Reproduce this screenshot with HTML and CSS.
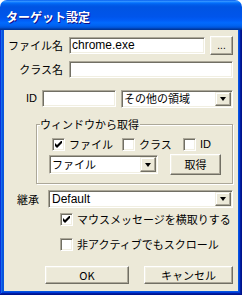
FILE: index.html
```html
<!DOCTYPE html>
<html lang="ja">
<head>
<meta charset="utf-8">
<title>ターゲット設定</title>
<link rel="stylesheet" href="styles.css">
</head>
<body>
<div class="win">
  <div class="title"><span>ターゲット設定</span></div>
  <div class="frame">
    <div class="client">
      <div class="row r1">
        <span class="lbl">ファイル名</span>
        <div class="field latin f-file">chrome.exe</div>
        <div class="btn btn-dots">...</div>
      </div>
      <div class="row r2">
        <span class="lbl">クラス名</span>
        <div class="field f-class"></div>
      </div>
      <div class="row r3">
        <span class="lbl-id">ID</span>
        <div class="field f-id"></div>
        <div class="combo c-area"><span class="ctext">その他の領域</span><span class="drop"><i class="tri"></i></span></div>
      </div>
      <div class="group">
        <span class="legend">ウィンドウから取得</span>
        <div class="checks">
          <div class="ck ck1"><span class="cb"><svg width="7" height="7" viewBox="0 0 7 7"><polygon points="0,2 2,4 7,-1 7,2 2,7 0,5" fill="#000"/></svg></span><span>ファイル</span></div>
          <div class="ck ck2"><span class="cb"></span><span>クラス</span></div>
          <div class="ck ck3"><span class="cb"></span><span class="latin-s">ID</span></div>
        </div>
        <div class="grow">
          <div class="combo c-src"><span class="ctext">ファイル</span><span class="drop"><i class="tri"></i></span></div>
          <div class="btn btn-get">取得</div>
        </div>
      </div>
      <div class="row r4">
        <span class="lbl-inh">継承</span>
        <div class="combo c-inh"><span class="ctext latin">Default</span><span class="drop"><i class="tri"></i></span></div>
      </div>
      <div class="chk chk1"><span class="cb"><svg width="7" height="7" viewBox="0 0 7 7"><polygon points="0,2 2,4 7,-1 7,2 2,7 0,5" fill="#000"/></svg></span><span>マウスメッセージを横取りする</span></div>
      <div class="chk chk2"><span class="cb"></span><span>非アクティブでもスクロール</span></div>
      <div class="btns">
        <div class="btn btn-ok">OK</div>
        <div class="btn btn-cancel">キャンセル</div>
      </div>
    </div>
  </div>
</div>
</body>
</html>
```
FILE: styles.css
```css
* { box-sizing: border-box; }
html, body { margin: 0; padding: 0; background: #ffffff; }
body {
  width: 242px; height: 295px; overflow: hidden;
  font-family: "Noto Sans CJK JP", "Liberation Sans", sans-serif;
  font-size: 11px; line-height: 13px; color: #000;
}
.win {
  width: 242px; height: 295px;
  display: flex; flex-direction: column;
  border-radius: 7px 7px 0 0; overflow: hidden;
}
.title {
  height: 30px; flex: none;
  display: flex; align-items: center;
  padding: 3px 0 0 6px;
  color: #fff; font-weight: bold; font-size: 12px;
  text-shadow: 1px 1px #0f1089;
  background: linear-gradient(to bottom, #0058ee 0%, #3593ff 4%, #288eff 6%, #127dff 8%, #036ffc 10%, #0262ee 14%, #0057e5 20%, #0054e3 24%, #0055eb 56%, #005bf5 66%, #026afe 76%, #0062ef 86%, #0052d6 92%, #0040ab 96%, #003092 100%);
}
.frame {
  flex: 1; display: flex;
  padding: 0 4px 4px 4px;
  background: #0855dd;
  box-shadow: inset -1px -1px #00138c, inset 1px 0 #0831d9, inset -2px -2px #001ea0, inset 2px 0 #166aee, inset -3px -3px #003bda, inset 3px 0 #0855dd;
}
.client { flex: 1; background: #ece9d8; }

.latin { font-family: "Liberation Sans", sans-serif; font-size: 12px; }
.latin-s { font-family: "Liberation Sans", sans-serif; font-size: 11px; }

.row { display: flex; align-items: center; }
.lbl { width: 59px; margin-right: 6px; text-align: right; }

.field {
  height: 17px; background: #fff;
  border: 1px solid; border-color: #aca899 #fff #fff #aca899;
  box-shadow: inset 1px 1px #716f64, inset -1px -1px #f1efe2;
  padding: 0 2px; line-height: 15px; white-space: nowrap; overflow: hidden;
}

.btn {
  display: flex; align-items: center; justify-content: center;
  background: #ece9d8;
  border: 1px solid; border-color: #fff #716f64 #716f64 #fff;
  box-shadow: inset -1px -1px #aca899, inset 1px 1px #f1efe2;
}

.combo {
  display: flex; align-items: center;
  height: 19px; background: #fff;
  border: 1px solid; border-color: #aca899 #fff #fff #aca899;
  box-shadow: inset 1px 1px #716f64, inset -1px -1px #f1efe2;
  padding: 1px 1px 1px 2px;
}
.ctext { flex: 1; white-space: nowrap; line-height: 15px; }
.drop {
  width: 16px; align-self: stretch;
  display: flex; align-items: center; justify-content: center;
  background: #ece9d8;
  border: 1px solid; border-color: #f1efe2 #716f64 #716f64 #f1efe2;
  box-shadow: inset -1px -1px #aca899, inset 1px 1px #fff;
}
.tri {
  width: 0; height: 0;
  border-left: 3.5px solid transparent; border-right: 3.5px solid transparent;
  border-top: 4px solid #000;
}

.r1 { height: 19px; margin-top: 6px; }
.f-file { width: 136px; margin-right: 5px; }
.btn-dots {
  width: 23px; height: 19px;
  font-family: "Liberation Sans", sans-serif; font-size: 10px;
  align-items: flex-end; padding-bottom: 3px; line-height: 10px;
}

.r2 { height: 17px; margin-top: 6px; }
.f-class { width: 164px; }

.r3 { height: 19px; margin-top: 11px; padding-left: 22px; }
.lbl-id { width: 16px; font-family: "Liberation Sans", sans-serif; font-size: 11px; }
.f-id { width: 74px; margin-right: 5px; }
.c-area { width: 112px; height: 18px; }

.group {
  margin: 16px 0 0 32px; width: 197px; height: 60px;
  border: 1px solid #aca899;
  box-shadow: inset 1px 1px #fff, 1px 1px #fff;
}
.legend {
  display: block; width: max-content;
  margin: -7px 0 0 3px; padding: 0 1px 0 0;
  background: #ece9d8; line-height: 13px;
}
.checks { display: flex; align-items: center; height: 13px; margin: 7px 0 0 15px; }
.ck { display: flex; align-items: center; }
.ck1 { width: 70px; }
.ck2 { width: 61px; }
.cb {
  width: 13px; height: 13px; flex: none; margin-right: 4px;
  background: #fff;
  border: 1px solid; border-color: #aca899 #fff #fff #aca899;
  box-shadow: inset 1px 1px #716f64, inset -1px -1px #f1efe2;
  display: flex; align-items: center; justify-content: center;
}
.cb svg { display: block; }

.grow { display: flex; align-items: center; height: 21px; margin: 3px 0 0 12px; }
.c-src { width: 109px; }
.btn-get { width: 51px; height: 21px; margin-left: 12px; }

.r4 { height: 18px; margin-top: 6px; padding-left: 13px; }
.lbl-inh { width: 31px; }
.c-inh { width: 185px; height: 18px; padding-left: 3px; }

.chk { display: flex; align-items: center; height: 13px; padding-left: 56px; }
.chk1 { margin-top: 5px; }
.chk2 { margin-top: 12px; }

.btns { display: flex; margin: 15px 0 0 41px; height: 18px; }
.btn-ok { width: 84px; height: 18px; margin-right: 15px; }
.btn-cancel { width: 89px; height: 18px; }
```
